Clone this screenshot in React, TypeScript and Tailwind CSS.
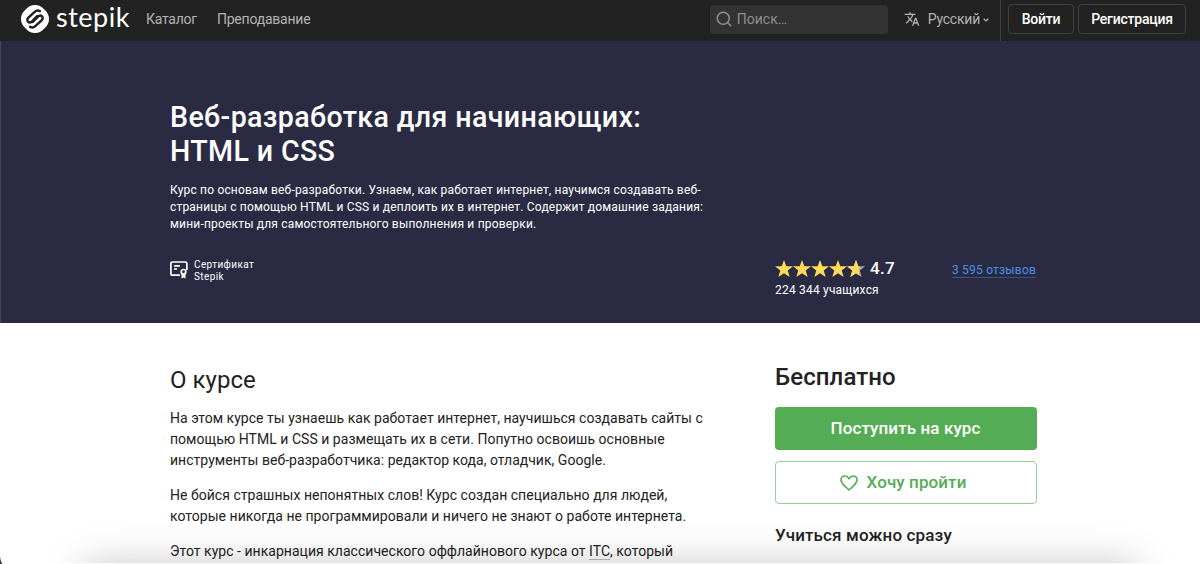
import { ChevronDown, Search } from "lucide-react"
import { MdTranslate } from "react-icons/md"

const STAR = "M9 0.1l2.3 6.2h6.7l-5.3 4.1 2 6.7L9 13.2l-5.7 3.9 2-6.7L0 6.3h6.7z"

function Logo() {
  return (
    <a className="flex items-center text-white">
      <svg width="28" height="28" viewBox="0 0 28 28">
        <path
          d="M14 0C17.8 0 20.3 1.4 23.4 4.6C26.6 7.7 28 10.2 28 14S26.6 20.3 23.4 23.4C20.3 26.6 17.8 28 14 28S7.7 26.6 4.6 23.4C1.4 20.3 0 17.8 0 14S1.4 7.7 4.6 4.6C7.7 1.4 10.2 0 14 0Z"
          fill="#fff"
        />
        <g fill="none" stroke="#222" strokeWidth="2.5" strokeLinecap="round" strokeLinejoin="round">
          <path d="M18.9 6.1C16.9 5.1 15 5.5 13.4 7.1L7.4 12.7C4.5 15.6 8.1 19.1 11 16.3L16.2 11.2" />
          <path d="M9.1 21.9C11.1 22.9 13 22.5 14.6 20.9L20.6 15.3C23.5 12.4 19.9 8.9 17 11.7L11.8 16.8" />
        </g>
      </svg>
      <span className="ml-[7px] h-[34px] font-['Lato'] text-[27px] leading-[29px] tracking-[0.5px]">stepik</span>
    </a>
  )
}

function Header() {
  return (
    <header className="flex h-[41px] items-center bg-[#222] pb-[3px] pl-[21px] pr-[14px] text-[14px] tracking-[-0.23px] text-[#b3b3b3]">
      <Logo />
      <nav className="ml-4 flex gap-5">
        <a>Каталог</a>
        <a>Преподавание</a>
      </nav>
      <div className="ml-auto flex h-[29px] w-[178px] items-center rounded bg-[#333] pl-[5px] text-[#8f8f8f]">
        <Search size={18} strokeWidth={2} />
        <span className="ml-1 tracking-normal">Поиск…</span>
      </div>
      <button className="ml-[16px] flex items-center">
        <MdTranslate size={16} />
        <span className="ml-2">Русский</span>
        <ChevronDown size={8} strokeWidth={3.5} className="ml-[2px] mt-[2px]" />
      </button>
      <div className="-mb-[3px] ml-[10px] h-[41px] w-px bg-[#404040]" />
      <button className="ml-[7px] h-[30px] w-[66px] rounded border border-[#404040] font-medium text-white">
        Войти
      </button>
      <button className="ml-1 h-[30px] w-[108px] rounded border border-[#404040] font-medium text-white">
        Регистрация
      </button>
    </header>
  )
}

function CertificateIcon() {
  return (
    <svg width="18" height="18" viewBox="0 0 18 18" fill="none" stroke="#fff" strokeWidth="1.7">
      <path d="M10 14.2H2.5Q.9 14.2 .9 12.6V2.6Q.9 1 2.5 1H15.3Q16.9 1 16.9 2.6V9" />
      <path d="M4 4.8h6M4 8h3" />
      <circle cx="13.5" cy="10.8" r="2.3" />
      <path d="M11.5 13V17.6l2-1.2 2 1.2V13z" fill="#fff" stroke="none" />
    </svg>
  )
}

function Stars() {
  return (
    <div className="flex">
      {[0, 1, 2, 3, 4].map((i) => (
        <svg key={i} width="18" height="18" viewBox="0 0 18 18">
          <path d={STAR} fill={i === 4 ? "#aaa" : "#ffdb5c"} />
          {i === 4 && <path d={STAR} fill="#ffdb5c" style={{ clipPath: "inset(0 32% 0 0)" }} />}
        </svg>
      ))}
    </div>
  )
}

function Hero() {
  return (
    <section className="flex h-[282px] border-l border-[#44465c] bg-[#2a2b43] pl-[169px] text-white">
      <div className="w-[605px] pt-[59px]">
        <h1 className="whitespace-nowrap text-[28.6px] font-medium leading-[34px] tracking-[0.37px]">
          Веб-разработка для начинающих:
          <br />
          HTML и CSS
        </h1>
        <p className="mt-[14px] whitespace-nowrap text-[12px] leading-[17px] tracking-[0.185px]">
          Курс по основам веб-разработки. Узнаем, как работает интернет, научимся создавать веб-
          <br />
          страницы с помощью HTML и CSS и деплоить их в интернет. Содержит домашние задания:
          <br />
          мини-проекты для самостоятельного выполнения и проверки.
        </p>
        <div className="mt-[26px] flex items-start">
          <div className="pt-[2px]">
            <CertificateIcon />
          </div>
          <div className="ml-[6px] text-[10px] leading-[11.5px] tracking-[0.4px]">
            Сертификат
            <br />
            Stepik
          </div>
        </div>
      </div>
      <div className="w-[261px] pt-[218px]">
        <div className="flex h-[20px] items-center">
          <Stars />
          <span className="ml-[5px] text-[17px] font-medium tracking-[0.3px]">4.7</span>
          <a className="ml-auto mt-[3px] border-b border-[#365680] text-[12px] leading-[14px] tracking-[0.2px] text-[#4a90e2]">
            3 595 отзывов
          </a>
        </div>
        <div className="mt-[3px] text-[12px] leading-[16px] tracking-[0.2px]">224 344 учащихся</div>
      </div>
    </section>
  )
}

function About() {
  return (
    <div className="w-[605px] whitespace-nowrap pt-[41.5px] text-sm leading-[21.4px] tracking-[0.03px]">
      <h2 className="text-[24px] leading-[30px]">О курсе</h2>
      <p className="mt-[13px]">
        На этом курсе ты узнаешь как работает интернет, научишься создавать сайты с
        <br />
        помощью HTML и CSS и размещать их в сети. Попутно освоишь основные
        <br />
        инструменты веб-разработчика: редактор кода, отладчик, Google.
      </p>
      <p className="mt-[13px]">
        Не бойся страшных непонятных слов! Курс создан специально для людей,
        <br />
        которые никогда не программировали и ничего не знают о работе интернета.
      </p>
      <p className="mt-[13px]">
        Этот курс - инкарнация классического оффлайнового курса от{" "}
        <a className="border-b border-[#bbb]">ITC</a>, который
      </p>
    </div>
  )
}

function Enroll() {
  return (
    <aside className="w-[262px] pt-[38px] font-medium">
      <div className="text-[24px] leading-[32px] tracking-[0.1px]">Бесплатно</div>
      <button className="mt-[14px] h-[43px] w-full rounded bg-[#54ad54] pr-[1px] text-[17px] tracking-[0.1px] text-white">
        Поступить на курс
      </button>
      <button className="mt-[11px] flex h-[43px] w-full items-center justify-center rounded border border-[#98ce98] pr-[6px] text-[17px] tracking-[0.1px] text-[#54ad54]">
        <svg width="18" height="16" viewBox="0 0 18 16" fill="none" stroke="currentColor" strokeWidth="1.6" className="mr-[9px]">
          <path d="M9 14.9C4 10.6 1 8.2 1 4.9C1 2.6 2.7 1 4.8 1C6.5 1 8 2 9 3.5C10 2 11.5 1 13.2 1C15.3 1 17 2.6 17 4.9C17 8.2 14 10.6 9 14.9Z" />
        </svg>
        Хочу пройти
      </button>
      <div className="mt-[19px] text-[17px] leading-[24px] tracking-[0.14px]">Учиться можно сразу</div>
    </aside>
  )
}

export default function App() {
  return (
    <div className="relative h-[564px] w-[1200px] overflow-hidden bg-white font-['Roboto',sans-serif] text-[#222]">
      <Header />
      <Hero />
      <main className="flex pl-[170px]">
        <About />
        <Enroll />
      </main>
      {/* shadow rising from below the window */}
      <div className="pointer-events-none absolute left-[90px] top-[572px] h-[40px] w-[1040px] shadow-[0_0_40px_6px_rgba(0,0,0,0.25)]" />
      <div className="absolute bottom-0 left-0 h-px w-full bg-white/80" />
      <svg className="absolute bottom-0 left-0" width="3" height="8" viewBox="0 0 3 8">
        <path d="M0 0Q.5 6 2.5 8H0z" fill="#333" />
      </svg>
    </div>
  )
}
